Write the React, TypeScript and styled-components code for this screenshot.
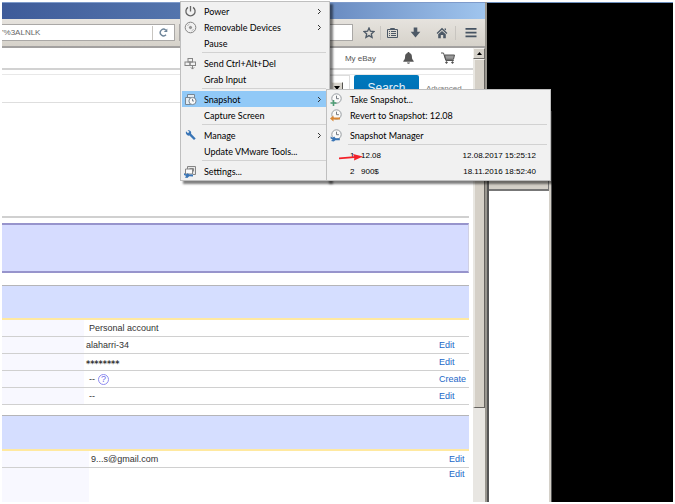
import React from "react";
import styled, { createGlobalStyle } from "styled-components";

const GlobalStyle = createGlobalStyle`
  * { box-sizing: border-box; }
  body { margin: 0; background: #fff; font-family: "Liberation Sans", Arial, sans-serif; font-size: 9px; color: #333; }
  button, input, select { font: inherit; color: inherit; margin: 0; padding: 0; border: 0; background: none; border-radius: 0; }
  svg { display: block; flex: none; }
`;

const Screen = styled.div`
  position: relative;
  height: 100vh;
  min-height: 504px;
  padding: 2px;
  display: flex;
  overflow: hidden;
`;

const Browser = styled.main`
  flex: 1;
  min-width: 0;
  display: flex;
  flex-direction: column;
  border-right: 2px solid #99968f;
`;

const TitleBar = styled.div`
  height: 17px;
  flex: none;
  border-top: 1px solid #7e9bcb;
  background: linear-gradient(90deg, #3e5b99, #5475ad 37%, #6d8fc4 70%, #a0c5ee);
`;

const Toolbar = styled.div`
  height: 29px;
  flex: none;
  display: flex;
  align-items: center;
  background: linear-gradient(#e6e3de, #d6d2ca);
  border-bottom: 2px solid #a3a1a0;
`;

const AddressBox = styled.div`
  display: flex;
  align-items: center;
  width: 173px;
  height: 17px;
  background: #fff;
  border: 1px solid #aaa8a6;
  border-left: 0;
`;

const AddressInput = styled.input`
  flex: 1;
  min-width: 0;
  height: 15px;
  font-size: 8px;
  color: #666;
  outline: 0;
`;

const SearchBox = styled.input`
  flex: 1;
  min-width: 0;
  height: 17px;
  margin: 0 5px 0 4px;
  background: #fff;
  border: 1px solid #aaa8a6;
`;

const IconButton = styled.button<{ $w: number; $line?: boolean }>`
  width: ${(p) => p.$w}px;
  height: 14px;
  flex: none;
  display: flex;
  align-items: center;
  justify-content: center;
  border-left: ${(p) => (p.$line ? "1px solid #c8c5c0" : "0")};
`;

const Viewport = styled.div`
  flex: 1;
  min-height: 0;
  display: flex;
`;

const Content = styled.div`
  flex: 1;
  min-width: 0;
  background: #fff;
  overflow: hidden;
`;

const SiteBar = styled.header`
  height: 22px;
  display: flex;
  align-items: center;
  justify-content: flex-end;
  gap: 26px;
  padding-right: 18px;
  border-bottom: 2px solid #d2d2d2;
`;

const SiteLink = styled.a`
  font-size: 8px;
  color: #555;
  text-decoration: none;
`;

const SearchRow = styled.form`
  display: flex;
  justify-content: flex-end;
  height: 29px;
  margin-top: 4px;
  padding-right: 12px;
  border-top: 1px solid #e8e8e8;
  border-bottom: 1px solid #dedede;
`;

const CategoryField = styled.label`
  width: 50px;
  height: 26px;
  margin-right: 4px;
  display: grid;
  border: 1px solid #ddd;
  background: #fff;
  > * { grid-area: 1 / 1; }
`;

const CategorySelect = styled.select`
  appearance: none;
  width: 100%;
`;

const DropArrow = styled.span`
  align-self: center;
  justify-self: end;
  width: 12px;
  height: 12px;
  margin-right: 6px;
  display: flex;
  align-items: center;
  justify-content: center;
  background: #d6d2ca;
  border: 1px solid #55534f;
  border-top-color: #f4f2ee;
  border-left-color: #f4f2ee;
  pointer-events: none;
`;

const SearchButton = styled.button`
  width: 65px;
  height: 26px;
  border-radius: 2px;
  background: linear-gradient(#0079bc, #006cb4);
  color: #e4f1fa;
  font-size: 12px;
`;

const AdvancedLink = styled.a`
  width: 42px;
  padding: 9px 0 0 7px;
  font-size: 8px;
  color: #777;
  text-decoration: none;
`;

const Profile = styled.div`
  margin-right: 4px;
`;

const Rule = styled.hr`
  height: 2px;
  margin: 113px 0 5px;
  border: 0;
  background: #d0d0d0;
`;

const Notice = styled.section`
  height: 50px;
  margin-bottom: 12px;
  background: #d6dcff;
  border: 1px solid #9794cc;
  border-width: 2px 1px 2px 0;
  border-right-color: #d0d0e4;
`;

const SectionHead = styled.div<{ $h: number }>`
  height: ${(p) => p.$h}px;
  background: #d5deff;
  border-top: 1px solid #b5b5b8;
  border-bottom: 2px solid #ffe9a0;
`;

const InfoTable = styled.table`
  width: 100%;
  border-collapse: separate;
  border-spacing: 0;
  table-layout: fixed;
  margin-bottom: 10px;
`;

const Label = styled.th<{ $w: number }>`
  width: ${(p) => p.$w}px;
  padding: 0;
  background: #f8f8ff;
  border-bottom: 1px solid #d0d0d0;
`;

const Value = styled.td<{ $inset: number }>`
  height: 17px;
  padding: 1px 0 0 ${(p) => p.$inset}px;
  line-height: 15px;
  border-bottom: 1px solid #d0d0d0;
  white-space: nowrap;
`;

const Action = styled.td<{ $w: number }>`
  width: ${(p) => p.$w}px;
  height: 17px;
  padding: 1px 0 0;
  line-height: 15px;
  border-bottom: 1px solid #d0d0d0;
`;

const TailRow = styled.tr`
  th, td { height: 36px; border-bottom: 0; vertical-align: top; line-height: 10px; }
`;

const EditLink = styled.a`
  color: #2368c8;
  text-decoration: none;
`;

const Inline = styled.span`
  display: flex;
  align-items: center;
  gap: 3px;
`;

const Secret = styled.span`
  height: 12px;
  font-family: "DejaVu Sans", sans-serif;
  font-size: 8px;
  font-weight: bold;
`;

const HelpButton = styled.button`
  width: 11px;
  height: 11px;
  border: 1px solid #8f8cf0;
  border-radius: 50%;
  color: #6f6cec;
  line-height: 9px;
`;

const ScrollBar = styled.div`
  width: 12px;
  flex: none;
  display: flex;
  flex-direction: column;
  background: #e8e6e2;
`;

const ScrollArrow = styled.button`
  height: 11px;
  display: flex;
  align-items: center;
  justify-content: center;
  background: #d6d2ca;
  border: 1px solid #6b6966;
  border-top-color: #f4f2ee;
  border-left-color: #f4f2ee;
`;

const ScrollThumb = styled.div`
  height: 349px;
  background: #d5d0c7;
  border: 1px solid #66635f;
  border-top-color: #f6f4f0;
  border-left: 2px solid #e9e7e2;
`;

const Backdrop = styled.aside`
  width: 186px;
  flex: none;
  background: #000;
  border-top: 1px solid #6d8fbd;
`;

const RearWindow = styled.div`
  width: 65px;
  height: calc(100% - 108px);
  margin-top: 108px;
  background: #fff;
  border: 1px solid #555;
  border-left-width: 2px;
  border-bottom: 0;
  box-shadow: inset -2px 0 #d4d0c8;
`;

const RearBar = styled.div`
  height: 79px;
  margin-right: 2px;
  background: #d4d0c8;
  border: 1px solid #777;
  border-width: 0 1px 2px 0;
`;

const MenuPanel = styled.nav<{ $x: number; $y: number; $w: number }>`
  position: absolute;
  left: ${(p) => p.$x}px;
  top: ${(p) => p.$y}px;
  width: ${(p) => p.$w}px;
  padding: 1px;
  background: #f1f1f1;
  border: 1px solid #bfbfbf;
  box-shadow: 3px 3px 2px rgba(0, 0, 0, 0.5);
`;

const MenuItem = styled.button<{ $active?: boolean }>`
  width: 100%;
  height: 16px;
  display: grid;
  grid-template-columns: 22px 1fr auto;
  align-items: center;
  padding: 0 6px 0 0;
  background: ${(p) => (p.$active ? "#91c9f7" : "transparent")};
  font-family: Lato, "Open Sans", sans-serif;
  font-size: 9px;
  line-height: 15px;
  color: #000;
  text-align: left;
  white-space: nowrap;
`;

const IconSlot = styled.span`
  padding-left: 2px;
`;

const SnapshotItem = styled(MenuItem)`
  grid-template-columns: 22px 11px 1fr auto;
  padding-right: 13px;
  font-family: "Liberation Sans", Arial, sans-serif;
  font-size: 8px;
`;

const Divider = styled.hr`
  height: 1px;
  margin: 1px 2px 2px 20px;
  border: 0;
  background: #d2d2d2;
`;

const Pointer = styled.div`
  position: absolute;
  left: 12px;
  top: 63px;
`;

type Glyph =
  | "power" | "disc" | "keys" | "pages" | "wrench" | "settings" | "add" | "revert" | "manage";

const Clock = () => (
  <g fill="#fafafa" stroke="#969ba0">
    <circle cx="6.5" cy="5.5" r="4.7" />
    <path d="M6.5 2.7v3h2.4" fill="none" stroke="#747980" />
  </g>
);

const wrenchPath = "M1 1.3 3 3.2 4.4 1.8 2.6.4C5-.2 6.8 1.8 6.1 3.8L10.7 8.4 9 10.1 4.5 5.5C2.4 6.2.3 4 1 1.3Z";

function MenuIcon({ name }: { name: Glyph }) {
  return (
    <svg width="13" height="13" viewBox="0 0 13 13" fill="none" stroke="#858585" aria-hidden>
      {name === "power" && (
        <g stroke="#666" strokeWidth="1.3"><path d="M4 2.4a4.6 4.6 0 1 0 5 0" /><path d="M6.5 1v5.5" /></g>
      )}
      {name === "disc" && (
        <g><circle cx="6.5" cy="6.5" r="5.3" /><circle cx="6.5" cy="6.5" r="1.1" fill="#999" /><path d="M3.5 5a3.4 3.4 0 0 1 2-2M9.5 8a3.4 3.4 0 0 1-2 2" stroke="#bbb" /></g>
      )}
      {name === "keys" && (
        <g><rect x="4" y="1.5" width="4.5" height="3.5" /><rect x="1" y="5" width="5" height="3.5" /><rect x="6" y="5" width="5.5" height="3.5" /><path d="M8.5 8v4M6.8 10.3l1.7 1.8 1.7-1.8" /></g>
      )}
      {name === "pages" && (
        <g stroke="#778592" fill="#e4edf4"><path d="M3.5 4V1.5h7V9" /><path d="M1.5 4.5h5v7h-5z" /><circle cx="8.5" cy="8" r="3.6" fill="#fafafa" /><path d="M8.5 5.8V8H10" fill="none" /></g>
      )}
      {name === "wrench" && <path d={wrenchPath} transform="translate(1 1)" fill="#3975b6" stroke="none" />}
      {name === "settings" && (
        <g><path d="M3.5 6V1.5h8v8H9" fill="#e8e8e8" /><path d="M1.5 4h7v5h-7zM5.5 3.5h4v3" fill="#fafafa" /><path d="M0 8l2 1.4L3.6 8.2 5.3 9.4 9 9.6v1.8L5.2 11.2 3.4 13 .8 12.4 2.2 11 0 10Z" fill="#3975b6" stroke="none" /></g>
      )}
      {name === "add" && <><Clock /><path d="M3.5 7v6M.5 10h6" stroke="#4d9c74" strokeWidth="1.6" /></>}
      {name === "revert" && <><Clock /><path d="M0 9.5 3.5 6.6V8.6H10v2H3.5v2Z" fill="#d98735" stroke="none" /></>}
      {name === "manage" && <><Clock /><path d="M.6 7.4 2.6 8.8 4.2 7.6 5.6 9.2H9.8v2H5.4L3.8 12.6 1 12 2.6 10.6.6 9.6Z" fill="#3975b6" stroke="none" /></>}
    </svg>
  );
}

const Chevron = () => (
  <svg width="5" height="7" viewBox="0 0 5 7" fill="none" stroke="#333" aria-hidden><path d="m1 1 2.5 2.5L1 6" /></svg>
);

function Entry({ icon, text, more, active }: { icon?: Glyph; text: string; more?: boolean; active?: boolean }) {
  return (
    <MenuItem role="menuitem" $active={active} aria-haspopup={more ? "menu" : undefined}>
      <IconSlot>{icon && <MenuIcon name={icon} />}</IconSlot>
      <span>{text}</span>
      {more && <Chevron />}
    </MenuItem>
  );
}

const snapshots = [
  { id: 1, name: "12.08", date: "12.08.2017 15:25:12" },
  { id: 2, name: "900$", date: "18.11.2016 18:52:40" },
];

const account = [
  { value: "Personal account", inset: 5 },
  { value: "alaharri-34", inset: 2, action: "Edit" },
  { value: "********", inset: 2, action: "Edit", secret: true },
  { value: "--", inset: 5, action: "Create", help: true },
  { value: "--", inset: 5, action: "Edit" },
];

export default function App() {
  return (
    <>
      <GlobalStyle />
      <Screen>
        <Browser>
          <TitleBar />
          <Toolbar>
            <AddressBox>
              <AddressInput aria-label="Address" defaultValue="'%3ALNLK" />
              <IconButton $w={22} $line aria-label="Reload">
                <svg width="9" height="9" viewBox="0 0 9 9" fill="none" stroke="#6d8499" strokeWidth="1.4"><path d="M7 6.8A3.3 3.3 0 1 1 6.7 2" /><path d="M8.3.6v3.5H4.8Z" fill="#6d8499" stroke="none" /></svg>
              </IconButton>
            </AddressBox>
            <SearchBox aria-label="Search the web" />
            <IconButton $w={22} aria-label="Bookmark">
              <svg width="12" height="12" viewBox="0 0 12 12" fill="none" stroke="#4d5966" strokeWidth="1.3"><path d="m6 1 1.4 3.2 3.5.4-2.6 2.3.8 3.5L6 8.6l-3.1 1.8.8-3.5L1.1 4.6l3.5-.4Z" /></svg>
            </IconButton>
            <IconButton $w={23} $line aria-label="Reading list">
              <svg width="11" height="12" viewBox="0 0 11 12" fill="none" stroke="#4d5966"><path d="M.5 2.5h10v8H.5zM3.5 2.5v-1h4v1M4 4.5h5M4 6.5h5M4 8.5h5M2 4.5h1M2 6.5h1M2 8.5h1" /></svg>
            </IconButton>
            <IconButton $w={25} aria-label="Downloads">
              <svg width="11" height="11" viewBox="0 0 11 11" fill="#4d5966"><path d="M3.7.5h3.6v4.3h3L5.5 10.5.7 4.8h3Z" /></svg>
            </IconButton>
            <IconButton $w={27} aria-label="Home">
              <svg width="12" height="12" viewBox="0 0 12 12" fill="#4d5966"><path d="M6 .8 11.4 6l-.9.9L6 2.8 1.5 6.9.6 6Z" /><path d="M2.2 7.3 6 3.9l3.8 3.4v3.9H7.2V8H4.8v3.2H2.2ZM8.5 1.4H10v2l-1.5-1Z" /></svg>
            </IconButton>
            <IconButton $w={30} $line aria-label="Menu">
              <svg width="12" height="11" viewBox="0 0 12 11" fill="#465362"><path d="M.5 1h11v1.8H.5zM.5 4.7h11v1.8H.5zM.5 8.4h11v1.8H.5z" /></svg>
            </IconButton>
          </Toolbar>
          <Viewport>
            <Content>
              <SiteBar>
                <SiteLink href="#ebay">My eBay</SiteLink>
                <IconButton $w={13} aria-label="Notifications">
                  <svg width="11" height="12" viewBox="0 0 11 12" fill="#555"><path d="M5.5 0c.8 0 1 .5 1 1 1.6.4 2.4 1.6 2.4 3.6 0 2.2.5 3.2 1.8 4.3v.9H.3v-.9C1.6 7.8 2.1 6.8 2.1 4.6c0-2 .8-3.2 2.4-3.6 0-.5.2-1 1-1ZM4 10.5h3c-.3 1.8-2.7 1.8-3 0Z" /></svg>
                </IconButton>
                <IconButton $w={14} aria-label="Cart">
                  <svg width="14" height="12" viewBox="0 0 14 12" fill="none" stroke="#555"><path d="M0 1h2.5l2.3 7.5h8" /><path d="M3.5 3h10l-1 4.3H4.8Z" fill="#999" /><circle cx="5.5" cy="10.5" r=".8" fill="#555" /><circle cx="11.5" cy="10.5" r=".8" fill="#555" /></svg>
                </IconButton>
              </SiteBar>
              <SearchRow onSubmit={(e) => e.preventDefault()}>
                <CategoryField>
                  <CategorySelect aria-label="Category" />
                  <DropArrow>
                    <svg width="6" height="4" viewBox="0 0 6 4"><path d="M0 0h6L3 4Z" /></svg>
                  </DropArrow>
                </CategoryField>
                <SearchButton>Search</SearchButton>
                <AdvancedLink href="#advanced">Advanced</AdvancedLink>
              </SearchRow>
              <Profile>
                <Rule />
                <Notice />
                <SectionHead $h={35} />
                <InfoTable>
                  <tbody>
                    {account.map((row, i) => (
                      <tr key={i}>
                        <Label $w={82} scope="row" />
                        <Value $inset={row.inset}>
                          <Inline>
                            {row.secret ? <Secret>{row.value}</Secret> : row.value}
                            {row.help && <HelpButton aria-label="Help">?</HelpButton>}
                          </Inline>
                        </Value>
                        <Action $w={30}>{row.action && <EditLink href="#edit">{row.action}</EditLink>}</Action>
                      </tr>
                    ))}
                  </tbody>
                </InfoTable>
                <SectionHead $h={36} />
                <InfoTable>
                  <tbody>
                    <tr>
                      <Label $w={87} scope="row" />
                      <Value $inset={2}>9...s@gmail.com</Value>
                      <Action $w={20}><EditLink href="#email">Edit</EditLink></Action>
                    </tr>
                    <TailRow>
                      <Label $w={87} scope="row" />
                      <Value $inset={2} />
                      <Action $w={20}><EditLink href="#phone">Edit</EditLink></Action>
                    </TailRow>
                  </tbody>
                </InfoTable>
              </Profile>
            </Content>
            <ScrollBar>
              <ScrollArrow aria-label="Scroll up">
                <svg width="5" height="3" viewBox="0 0 5 3"><path d="M2.5 0 5 3H0Z" /></svg>
              </ScrollArrow>
              <ScrollThumb />
            </ScrollBar>
          </Viewport>
        </Browser>
        <Backdrop>
          <RearWindow><RearBar /></RearWindow>
        </Backdrop>

        <MenuPanel $x={180} $y={1} $w={150} role="menu" aria-label="Virtual machine">
          <Entry icon="power" text="Power" more />
          <Entry icon="disc" text="Removable Devices" more />
          <Entry text="Pause" />
          <Divider />
          <Entry icon="keys" text="Send Ctrl+Alt+Del" />
          <Entry text="Grab Input" />
          <Divider />
          <Entry icon="pages" text="Snapshot" more active />
          <Entry text="Capture Screen" />
          <Divider />
          <Entry icon="wrench" text="Manage" more />
          <Entry text="Update VMware Tools..." />
          <Divider />
          <Entry icon="settings" text="Settings..." />
        </MenuPanel>
        <MenuPanel $x={326} $y={89} $w={225} role="menu" aria-label="Snapshot">
          <Entry icon="add" text="Take Snapshot..." />
          <Entry icon="revert" text="Revert to Snapshot: 12.08" />
          <Divider />
          <Entry icon="manage" text="Snapshot Manager" />
          <Divider />
          {snapshots.map((s) => (
            <SnapshotItem key={s.id} role="menuitem">
              <span />
              <span>{s.id}</span>
              <span>{s.name}</span>
              <span>{s.date}</span>
            </SnapshotItem>
          ))}
          <Pointer>
            <svg width="25" height="8" viewBox="0 0 25 8" fill="#f3222a" aria-hidden><path d="M0 4.6 15 3.2 14 1l10 2.6L15 7.4l.3-2.3L0 6.3Z" /></svg>
          </Pointer>
        </MenuPanel>
      </Screen>
    </>
  );
}
